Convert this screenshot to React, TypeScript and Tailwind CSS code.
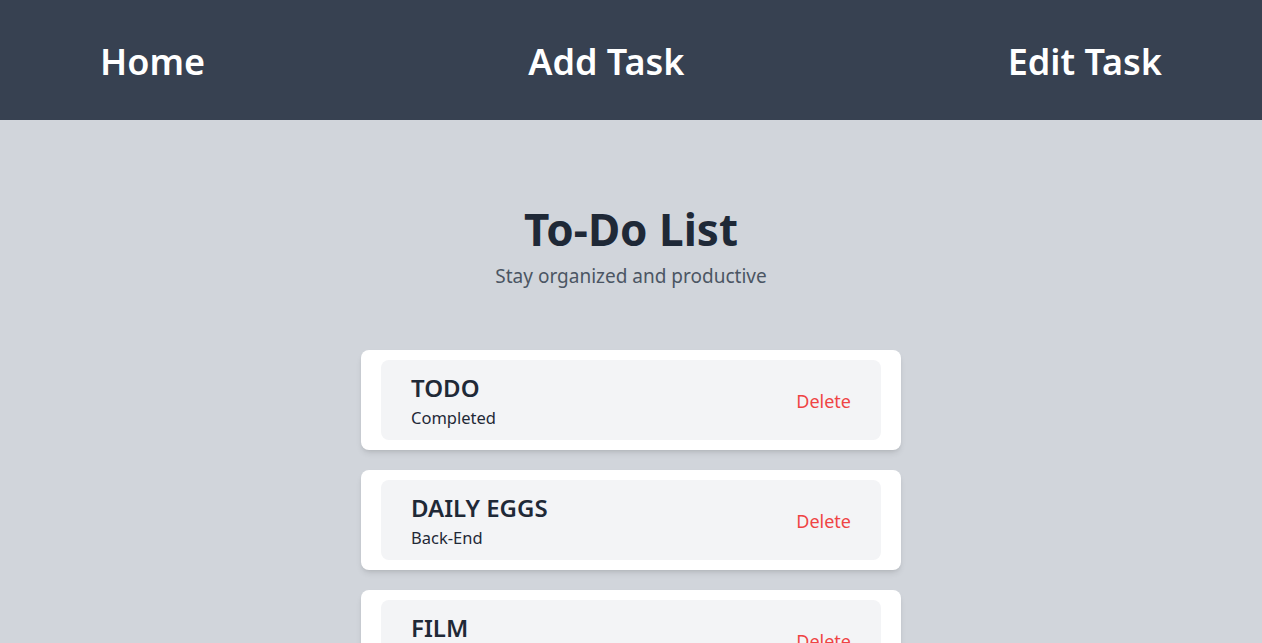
import React from "react";

const tasks = [
  { title: "TODO", sub: "Completed" },
  { title: "DAILY EGGS", sub: "Back-End" },
  { title: "FILM", sub: "Front-End" },
];

export default function App() {
  return (
    <div
      className="min-h-screen bg-[#d1d5db]"
      style={{ fontFamily: '"Noto Sans", "Open Sans", sans-serif' }}
    >
      <nav className="h-[120px] bg-[#374151] flex items-center justify-between px-[100px] pt-1">
        <span className="text-4xl leading-10 font-semibold text-white">Home</span>
        <span className="text-4xl leading-10 font-semibold text-white">Add Task</span>
        <span className="text-4xl leading-10 font-semibold text-white">Edit Task</span>
      </nav>
      <main className="flex flex-col items-center pt-[85px]">
        <h1 className="text-[44px] font-bold text-[#1f2937] leading-[48px]">To-Do List</h1>
        <p className="mt-[9px] text-[19px] text-[#4b5563] leading-7">Stay organized and productive</p>
        <div className="mt-[60px] w-[540px] flex flex-col gap-5">
          {tasks.map((t) => (
            <div key={t.title} className="bg-white rounded-lg shadow-md px-5 py-2.5">
              <div className="bg-[#f3f4f6] rounded-lg px-[30px] pt-3 pb-2.5 flex items-center justify-between">
                <div className="flex flex-col">
                  <span className="text-2xl font-semibold text-[#1f2937] leading-8">{t.title}</span>
                  <span className="mt-0.5 text-[16.5px] text-[#1f2937] leading-6">{t.sub}</span>
                </div>
                <button className="text-lg text-[#ef4444]">Delete</button>
              </div>
            </div>
          ))}
        </div>
      </main>
    </div>
  );
}
